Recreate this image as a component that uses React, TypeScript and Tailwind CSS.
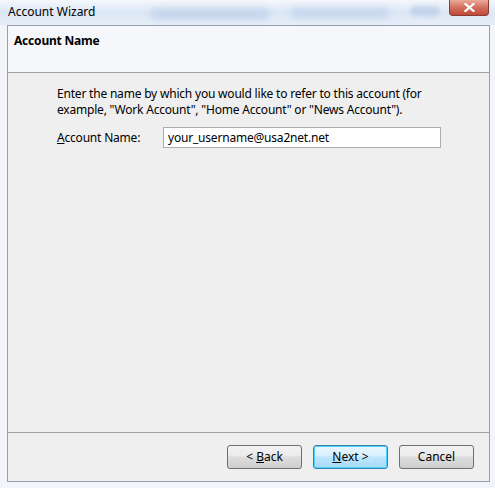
export default function App() {
  const font = { fontFamily: '"Noto Sans", "Open Sans", sans-serif' };
  return (
    <div
      className="w-[495px] h-[488px] flex flex-col bg-[#f3f5fb] text-[12px] text-black overflow-hidden"
      style={font}
    >
      {/* title bar */}
      <div className="relative h-[25px] shrink-0 flex items-center pl-[8px] bg-gradient-to-b from-[#f4f7fc] via-[#dce7f5] to-[#e6eef8]">
        <span className="leading-none -mt-[1px]">Account Wizard</span>
        <div className="absolute left-[150px] top-[8px] w-[120px] h-[12px] rounded-full bg-[#bfd0ea] opacity-70 blur-[3px]" />
        <div className="absolute left-[290px] top-[7px] w-[100px] h-[12px] rounded-full bg-[#c3d3ec] opacity-70 blur-[3px]" />
        <div className="absolute left-[410px] top-[6px] w-[30px] h-[10px] rounded-full bg-[#b9cbe6] opacity-70 blur-[2px]" />
        <button className="absolute right-[6px] top-0 w-[40px] h-[16px] rounded-b-[4px] border border-t-0 border-[#8a3a33] bg-gradient-to-b from-[#e9a99b] via-[#d2705e] to-[#c0483a] flex items-center justify-center">
          <svg width="11" height="9" viewBox="0 0 11 9">
            <path d="M1.5 1 L9.5 8 M9.5 1 L1.5 8" stroke="#ffffff" strokeWidth="2.2" strokeLinecap="square" />
          </svg>
        </button>
      </div>

      {/* client area */}
      <div className="ml-[7px] mr-[5px] h-[457px] flex flex-col border border-[#9a9ea6]">
        <div className="h-[47px] shrink-0 bg-[#f6f7fb] border-b border-[#a0a0a0] pl-[6px] pt-[6px]">
          <span className="font-bold text-[12px] tracking-[-0.2px]">Account Name</span>
        </div>

        <div className="flex-1 bg-[#efefef] pl-[49px] pr-[40px] pt-[13px]">
          <p className="leading-[16px] tracking-[-0.2px]">
            Enter the name by which you would like to refer to this account (for
            <br />
            example, "Work Account", "Home Account" or "News Account").
          </p>
          <div className="flex items-center mt-[9px]">
            <label className="w-[106px] tracking-[-0.2px]">
              <u>A</u>ccount Name:
            </label>
            <div className="w-[278px] h-[21px] border border-[#abadb3] bg-white flex items-center pl-[4px] tracking-[-0.2px]">
              your_username@usa2net.net
            </div>
          </div>
        </div>

        <div className="h-[49px] shrink-0 bg-[#efefef] border-t border-[#a0a0a0] flex justify-end items-start gap-[11px] pt-[12px] pr-[15px]">
          <button className="w-[75px] h-[24px] rounded-[3px] border border-[#707070] bg-[linear-gradient(to_bottom,#f2f2f2_0%,#ebebeb_45%,#dddddd_50%,#cfcfcf_100%)]">
            &lt; <u>B</u>ack
          </button>
          <button className="w-[75px] h-[24px] rounded-[3px] border border-[#3c7fb1] shadow-[inset_0_0_0_1px_#48d4fd] bg-[linear-gradient(to_bottom,#eaf6fd_0%,#d9f0fc_45%,#bee6fd_50%,#a7d9f5_100%)]">
            <u>N</u>ext &gt;
          </button>
          <button className="w-[75px] h-[24px] rounded-[3px] border border-[#707070] bg-[linear-gradient(to_bottom,#f2f2f2_0%,#ebebeb_45%,#dddddd_50%,#cfcfcf_100%)]">
            Cancel
          </button>
        </div>
      </div>
    </div>
  );
}
